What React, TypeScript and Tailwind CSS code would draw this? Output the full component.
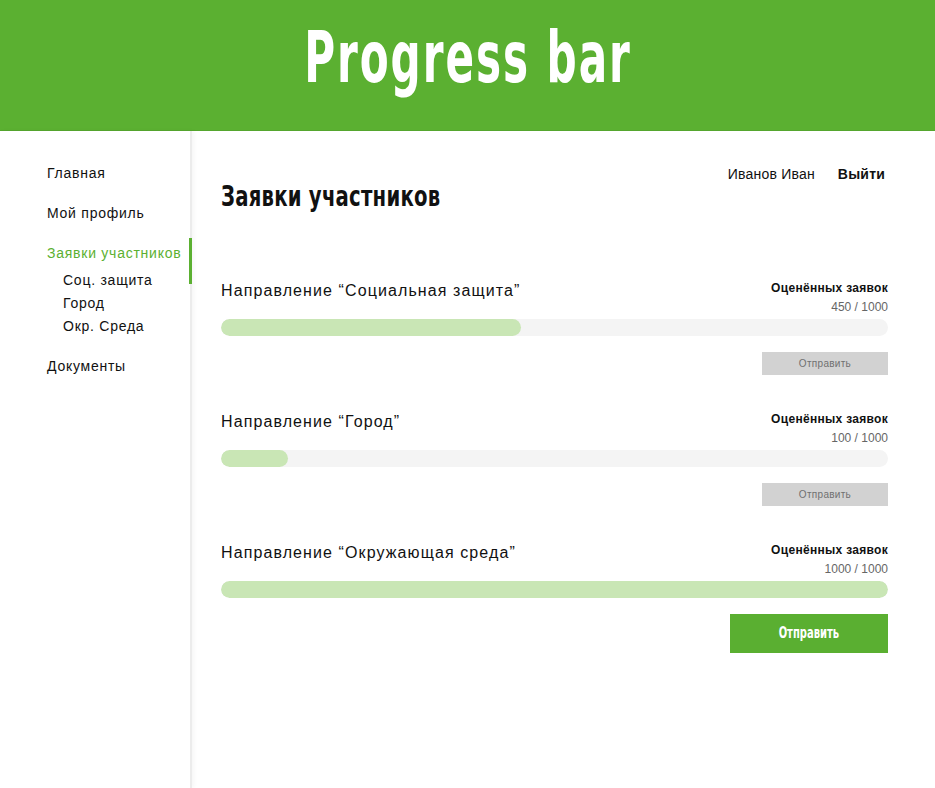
import React from "react";

type Direction = {
  title: string;
  done: number;
  total: number;
};

const directions: Direction[] = [
  { title: "Направление “Социальная защита”", done: 450, total: 1000 },
  { title: "Направление “Город”", done: 100, total: 1000 },
  { title: "Направление “Окружающая среда”", done: 1000, total: 1000 },
];

const sans = "font-['Liberation_Sans',Arial,sans-serif]";
const cond = "font-['DejaVu_Sans_Condensed','DejaVu_Sans',sans-serif]";

function DirectionBlock({ d }: { d: Direction }) {
  const pct = (d.done / d.total) * 100;
  const complete = d.done >= d.total;
  return (
    <div className="flex flex-col">
      <div className="flex items-start justify-between">
        <div className="pt-[1px] text-[16px] leading-[20px] tracking-[1.1px] text-[#111]">{d.title}</div>
        <div className="flex flex-col items-end">
          <div className="text-[12px] leading-[16px] font-bold tracking-[0.3px] text-[#111]">Оценённых заявок</div>
          <div className="mt-[3px] text-[12px] leading-[16px] text-[#666]">
            {d.done} / {d.total}
          </div>
        </div>
      </div>
      <div className="mt-[4px] h-[17px] w-full rounded-full bg-[#f4f4f4] overflow-hidden">
        <div className="h-full rounded-full bg-[#c9e6b5]" style={{ width: `${pct}%` }} />
      </div>
      <div className="flex justify-end">
        {complete ? (
          <button className="mt-[16px] h-[39px] w-[158px] bg-[#5aaf31] text-white flex items-center justify-center">
            <span className={`inline-block scale-x-[0.74] text-[15px] font-bold ${cond}`}>Отправить</span>
          </button>
        ) : (
          <button className="mt-[16px] h-[23px] w-[126px] bg-[#d2d2d2] text-[#707070] text-[10px] tracking-[0.3px]">
            Отправить
          </button>
        )}
      </div>
    </div>
  );
}

export default function App() {
  return (
    <div className={`min-h-[788px] w-full bg-white ${sans} flex flex-col`}>
      <header className="h-[131px] bg-[#5bb031] border-b border-[#55a62e] flex items-center justify-center overflow-hidden">
        <h1
          className={`${cond} inline-block scale-x-[0.65] font-bold text-white text-[72px] leading-none tracking-[3px] pb-[16px]`}
        >
          Progress bar
        </h1>
      </header>
      <div className="flex flex-1">
        <aside className="w-[192px] shrink-0 border-r-[2px] border-[#ececec] shadow-[2px_0_4px_rgba(0,0,0,0.04)] pt-[33px]">
          <nav className="flex flex-col text-[14px] leading-[18px] tracking-[0.75px] text-[#111]">
            <a className="pl-[47px]">Главная</a>
            <a className="pl-[47px] mt-[22px]">Мой профиль</a>
            <div className="mt-[19px] relative">
              <div className="absolute right-[-2px] top-[-3px] h-[46px] w-[3px] bg-[#5bb031]" />
              <a className="block pl-[47px] pt-[3px] text-[#5bb031]">Заявки участников</a>
              <div className="flex flex-col pl-[63px] pt-[9px] gap-[5px]">
                <a>Соц. защита</a>
                <a>Город</a>
                <a>Окр. Среда</a>
              </div>
            </div>
            <a className="pl-[47px] mt-[22px]">Документы</a>
          </nav>
        </aside>
        <main className="flex-1 pl-[29px] pr-[47px] pt-[34px]">
          <div className="flex items-start justify-between">
            <h2
              className={`${cond} inline-block origin-left scale-x-[0.78] font-bold text-[28px] leading-[32px] text-[#111] mt-[16px] tracking-[0.3px]`}
            >
              Заявки участников
            </h2>
            <div className="flex items-center gap-[23px] text-[14px] leading-[18px] tracking-[0.2px] text-[#111] mr-[3px]">
              <span>Иванов Иван</span>
              <span className="font-bold">Выйти</span>
            </div>
          </div>
          <div className="mt-[67px] flex flex-col gap-[36px]">
            {directions.map((d) => (
              <DirectionBlock key={d.title} d={d} />
            ))}
          </div>
        </main>
      </div>
    </div>
  );
}
